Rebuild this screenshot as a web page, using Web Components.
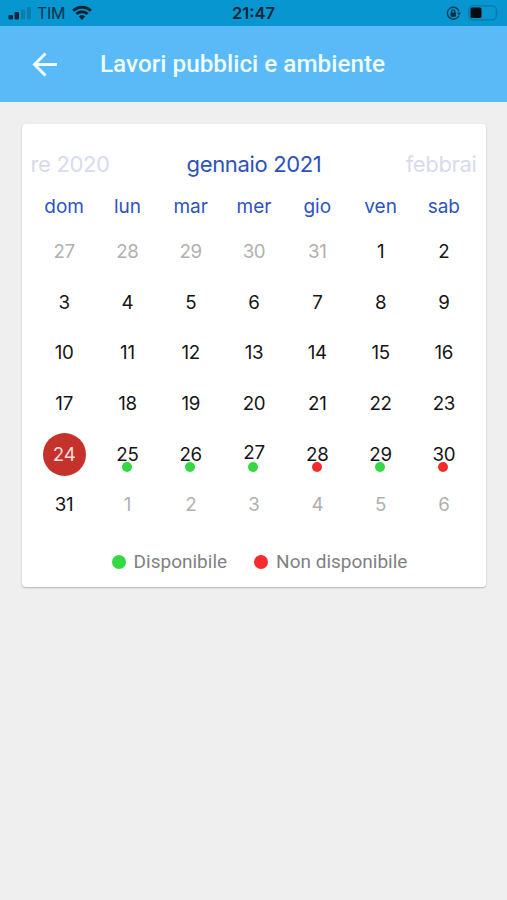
<!DOCTYPE html>
<html lang="it">
<head>
<meta charset="utf-8">
<title>Lavori pubblici e ambiente</title>
<style>
html,body{margin:0;height:100%;background:#efefef;overflow:hidden}
</style>
</head>
<body>
<calendar-app></calendar-app>
<script>
const define = (name, html, setup) => customElements.define(name, class extends HTMLElement {
  constructor() {
    super();
    this.attachShadow({ mode: 'open' }).innerHTML = html;
  }
  connectedCallback() { if (setup) setup(this, this.shadowRoot); }
});

define('status-bar', `
<style>
:host{display:grid;grid-template-columns:1fr auto 1fr;align-items:center;height:26px;box-sizing:border-box;padding:0 7px 0 7px;background:#0896d1;color:#06324a;font:500 16px/26px Inter,sans-serif}
.left,.right{display:flex;align-items:center}
.left span{font-weight:400;font-size:16px;margin:0 7px 0 6px;letter-spacing:-.3px}
.right{justify-content:flex-end;gap:7px}
.time{color:#052536;font-weight:600;font-size:16.5px}
svg{display:block}
</style>
<div class="left">
<svg width="24" height="26"><g fill="#042b40"><rect x="1.500" y="15" width="4.500" height="4.500" rx="1"/><rect x="7.500" y="12" width="4.500" height="7.500" rx="1"/></g><g fill="#087eaf"><rect x="14" y="9.500" width="4" height="10" rx="1"/><rect x="20" y="7" width="4" height="12.500" rx="1"/></g></svg>
<span>TIM</span>
<svg width="20" height="26" fill="none" stroke="#042536" stroke-width="2.900"><path d="M1.200 10.800a12.500 12.500 0 0 1 17.600 0M4.400 14a8 8 0 0 1 11.200 0"/><path d="M10 20l-3.200-3.400a4.700 4.700 0 0 1 6.400 0z" fill="#042536" stroke="none"/></svg>
</div>
<span class="time">21:47</span>
<div class="right">
<svg width="15" height="26" fill="none" stroke="#063b55" stroke-width="1.400"><path d="M12.800 15.700a6 6 0 1 1 .2-4.500"/><path d="M11 12.400h4l-2 3z" fill="#063b55" stroke="none"/><rect x="4.500" y="12.500" width="5.400" height="4.200" rx=".7" fill="#042b40" stroke="none"/><path d="M5.600 13v-1.500a1.600 1.600 0 0 1 3.200 0V13"/></svg>
<svg width="32" height="26"><rect x=".8" y="5.800" width="27.500" height="14" rx="4" fill="none" stroke="#087aa8" stroke-width="1.300"/><rect x="2.500" y="7.500" width="11" height="10.500" rx="1.500" fill="#020c12"/><path d="M29.500 10.500q2 2.300 0 4.600z" fill="#087aa8"/></svg>
</div>`);

define('app-bar', `
<style>
:host{display:flex;align-items:center;height:76px;box-sizing:border-box;padding-left:32px;background:#5abaf7;color:#ecfcff;font:500 24.300px/32px Roboto,sans-serif;border-bottom:1px solid #64b9ec}
svg{margin-right:42px;flex:none}
</style>
<svg width="26" height="26" fill="none" stroke="#f0fdff" stroke-width="2.900"><path d="M25 13.500H3M13.500 2.500L2.500 13.500l11 11"/></svg>
<slot></slot>`);

define('month-strip', `
<style>
:host{display:grid;grid-template-columns:1fr auto 1fr;height:40px;line-height:40px;font-size:22px;letter-spacing:-.35px;color:#2b51bd;white-space:nowrap}
.side{color:#d7dbed}.prev{margin-left:-2px}.next{text-align:right;margin-right:-1px}
</style>
<span class="side prev">re 2020</span><span class="now">gennaio 2021</span><span class="side next">febbrai</span>`);

define('calendar-day', `
<style>
:host{display:flex;align-items:center;justify-content:center;position:relative;font-size:18.700px;letter-spacing:-.3px;color:#151515}
:host([muted]){color:#b0b0b0}
:host([selected]) .num{background:#c5312b;color:#ffdfda;width:43px;height:43px;line-height:43px;border-radius:50%;text-align:center}
:host([raised]) .num{transform:translateY(-2.500px)}
i{display:none;position:absolute;width:10px;height:10px;border-radius:50%;left:calc(50% - 5.500px);top:calc(50% + 7.500px);background:#34d843}
:host([state]) i{display:block}
:host([state=no]) i{background:#f32b2b}
</style>
<span class="num"><slot></slot></span><i></i>`);

define('month-grid', `
<style>
:host{display:block}
.week,.days{display:grid;grid-template-columns:repeat(7,1fr)}
.week{height:42px;line-height:45px;text-align:center;font-size:19px;color:#2d54bf}
.days{grid-auto-rows:50.700px}
</style>
<div class="week"></div><div class="days"></div>`, (el, root) => {
  root.querySelector('.week').innerHTML = ['dom','lun','mar','mer','gio','ven','sab'].map(d => `<span>${d}</span>`).join('');
  const states = { 25:'yes', 26:'yes', 27:'yes', 28:'no', 29:'yes', 30:'no' };
  let out = '';
  for (let i = -4; i <= 37; i++) {
    const muted = i < 1 || i > 31;
    const n = i < 1 ? i + 31 : i > 31 ? i - 31 : i;
    const attrs = muted ? 'muted' : (n === 24 ? 'selected ' : '') + (n === 27 ? 'raised ' : '') + (states[n] ? `state="${states[n]}"` : '');
    out += `<calendar-day ${attrs}>${n}</calendar-day>`;
  }
  root.querySelector('.days').innerHTML = out;
});

define('legend-item', `
<style>
:host{display:flex;align-items:center;gap:8px;font:400 19px/24px Roboto,sans-serif;color:#818181}
i{width:14px;height:14px;border-radius:50%;background:var(--dot)}
</style><i></i><span><slot></slot></span>`);

define('calendar-card', `
<style>
:host{display:block;box-sizing:border-box;width:464px;height:463px;margin:22px 0 0 22px;padding:20px 10.500px 0;background:#fff;border-radius:4px;box-shadow:0 1px 2px rgba(0,0,0,.25);font-family:Inter,sans-serif}
.legend{display:flex;justify-content:center;gap:27px;padding-top:20px;padding-left:11px}
</style>
<month-strip></month-strip>
<month-grid></month-grid>
<div class="legend"><legend-item style="--dot:#34d843">Disponibile</legend-item><legend-item style="--dot:#f92d2d">Non disponibile</legend-item></div>`);

define('calendar-app', `
<style>:host{display:block;height:900px;background:#efefef}</style>
<status-bar></status-bar>
<app-bar>Lavori pubblici e ambiente</app-bar>
<calendar-card></calendar-card>`);
</script>
</body>
</html>
